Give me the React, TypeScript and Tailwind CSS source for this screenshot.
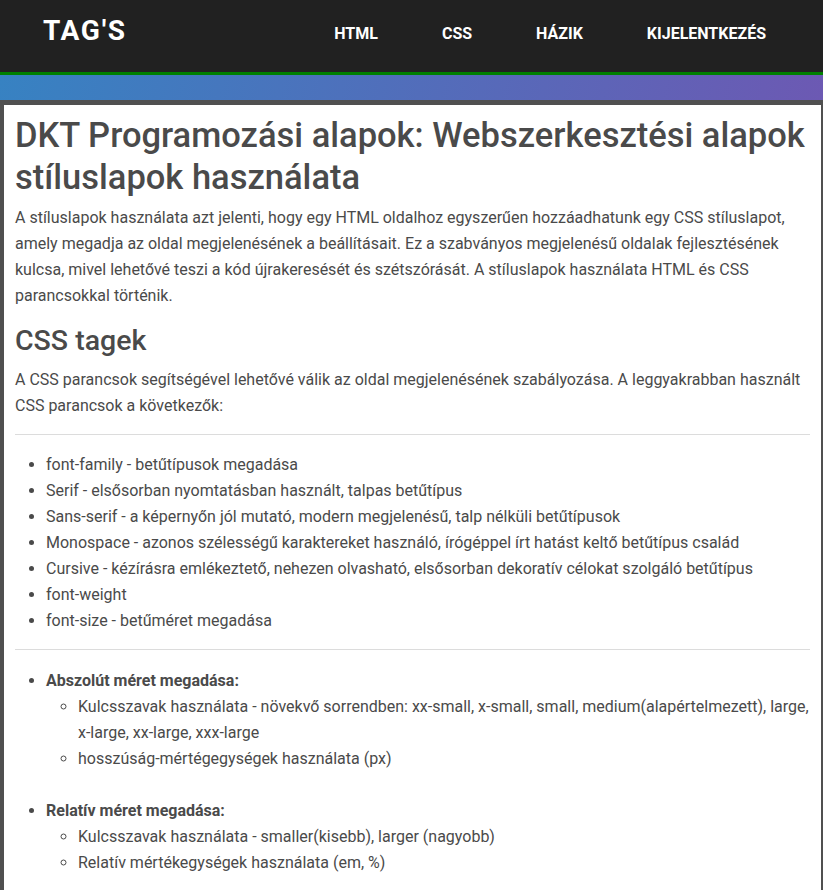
export default function App() {
  const items = [
    "font-family - betűtípusok megadása",
    "Serif - elsősorban nyomtatásban használt, talpas betűtípus",
    "Sans-serif - a képernyőn jól mutató, modern megjelenésű, talp nélküli betűtípusok",
    "Monospace - azonos szélességű karaktereket használó, írógéppel írt hatást keltő betűtípus család",
    "Cursive - kézírásra emlékeztető, nehezen olvasható, elsősorban dekoratív célokat szolgáló betűtípus",
    "font-weight",
    "font-size - betűméret megadása",
  ];
  return (
    <div className="min-h-[890px] bg-[#505050] font-['Roboto',sans-serif]">
      <header className="flex h-[72px] bg-[#212121] pl-[43px] pr-[57px]">
        <div className="pt-[17px] text-[28px] font-bold leading-[28px] tracking-[1.7px] text-white">TAG'S</div>
        <nav className="ml-auto flex gap-[64px] pt-[26px] text-[16px] font-bold leading-4 text-white">
          <span>HTML</span>
          <span>CSS</span>
          <span>HÁZIK</span>
          <span>KIJELENTKEZÉS</span>
        </nav>
      </header>
      <div className="h-[3px] bg-[#008000]" />
      <div className="h-[25px] bg-[linear-gradient(100deg,#3782c2,#6c59b3)]" />
      <main className="ml-[4px] mr-[2px] mt-[5px] bg-white px-[11px] pb-10 pt-[9px] text-[16px] leading-[26px] text-[#4a4a4a]">
        <h1 className="text-[34.5px] font-medium leading-[42px]">
          DKT Programozási alapok: Webszerkesztési alapok stíluslapok használata
        </h1>
        <p className="mt-[7px]">
          A stíluslapok használata azt jelenti, hogy egy HTML oldalhoz egyszerűen hozzáadhatunk egy CSS stíluslapot, amely
          megadja az oldal megjelenésének a beállításait. Ez a szabványos megjelenésű oldalak fejlesztésének kulcsa, mivel
          lehetővé teszi a kód újrakeresését és szétszórását. A stíluslapok használata HTML és CSS parancsokkal történik.
        </p>
        <h2 className="mt-[14px] text-[28.5px] font-medium leading-[36px]">CSS tagek</h2>
        <p className="mt-[8px]">
          A CSS parancsok segítségével lehetővé válik az oldal megjelenésének szabályozása. A leggyakrabban használt CSS
          parancsok a következők:
        </p>
        <hr className="mt-[15px] border-[#dcdcdc]" />
        <ul className="mt-[17px] list-disc pl-[31px]">
          {items.map((t) => (
            <li key={t}>{t}</li>
          ))}
        </ul>
        <hr className="mt-[15px] border-[#dcdcdc]" />
        <ul className="mt-[18px] list-disc pl-[31px]">
          <li>
            <b className="font-bold">Abszolút méret megadása:</b>
            <ul className="list-[circle] pl-[32px]">
              <li>
                Kulcsszavak használata - növekvő sorrendben: xx-small, x-small, small, medium(alapértelmezett), large,
                x-large, xx-large, xxx-large
              </li>
              <li>hosszúság-mértégegységek használata (px)</li>
            </ul>
          </li>
          <li className="mt-[26px]">
            <b className="font-bold">Relatív méret megadása:</b>
            <ul className="list-[circle] pl-[32px]">
              <li>Kulcsszavak használata - smaller(kisebb), larger (nagyobb)</li>
              <li>Relatív mértékegységek használata (em, %)</li>
            </ul>
          </li>
        </ul>
      </main>
    </div>
  );
}
